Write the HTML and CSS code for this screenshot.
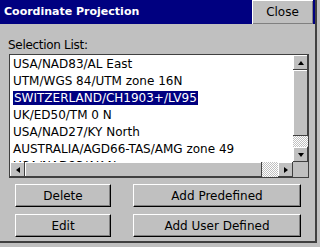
FILE: index.html
```html
<!DOCTYPE html>
<html lang="en">
<head>
  <meta charset="UTF-8" />
  <title>Coordinate Projection</title>
  <link rel="stylesheet" href="styles.css">
</head>
<body>

<div class="window">
  <div class="titlebar">
    <span class="title">Coordinate Projection</span>
    <button class="close">Close</button>
  </div>

  <div class="content">
    <div class="label">Selection List:</div>

    <div class="listbox">
      <div class="list-main">
        <div class="items">
          <div class="item">USA/NAD83/AL East</div>
          <div class="item">UTM/WGS 84/UTM zone 16N</div>
          <div class="item"><span class="selected">SWITZERLAND/CH1903+/LV95</span></div>
          <div class="item">UK/ED50/TM 0 N</div>
          <div class="item">USA/NAD27/KY North</div>
          <div class="item">AUSTRALIA/AGD66-TAS/AMG zone 49</div>
          <div class="item">USA/NAD83/AK N</div>
        </div>
        <div class="vscroll">
          <div class="arrow"><span class="tri up"></span></div>
          <div class="vthumb"></div>
          <div class="trough"></div>
          <div class="arrow"><span class="tri down"></span></div>
        </div>
      </div>
      <div class="hscroll">
        <div class="arrow"><span class="tri left"></span></div>
        <div class="hthumb"></div>
        <div class="trough"></div>
        <div class="arrow"><span class="tri right"></span></div>
        <div class="corner"></div>
      </div>
    </div>

    <div class="buttons">
      <button class="btn">Delete</button>
      <button class="btn">Add Predefined</button>
      <button class="btn">Edit</button>
      <button class="btn">Add User Defined</button>
    </div>
  </div>
</div>

</body>
</html>
```

FILE: styles.css
```css
body {
  margin: 0;
  background: #c0c0c0;
  font-family: "DejaVu Sans", sans-serif;
  font-size: 12px;
  color: #000;
}
.window {
  width: 315px;
  height: 241px;
  border-right: 2px solid #404040;
  border-bottom: 2px solid #404040;
  display: flex;
  flex-direction: column;
}
.titlebar {
  display: flex;
  height: 24px;
}
.title {
  flex: 1;
  background: #000080;
  color: #fff;
  font-weight: bold;
  font-size: 11px;
  line-height: 23px;
  padding-left: 4px;
}
.close {
  width: 63px;
  height: 24px;
  margin: 0;
  padding: 0;
  background: #c0c0c0;
  font-family: inherit;
  font-size: 12px;
  color: #000;
  border: none;
  border-right: 2px solid #000080;
  box-shadow: inset 1px 1px 0 #fff, inset -1px -1px 0 #808080;
}
.content {
  padding: 0 0 0 9px;
}
.label {
  margin: 12px 0 0 -1px;
  height: 18px;
  line-height: 18px;
  letter-spacing: -0.3px;
}
.listbox {
  width: 298px;
  height: 122px;
  border: 1px solid #404040;
  background: #fff;
  display: flex;
  flex-direction: column;
}
.list-main {
  flex: 1;
  display: flex;
  overflow: hidden;
}
.items {
  flex: 1;
  overflow: hidden;
  padding-top: 1px;
}
.item {
  height: 17px;
  line-height: 17px;
  padding-left: 3px;
  white-space: nowrap;
}
.selected {
  background: #000080;
  color: #fff;
  padding: 0 1px;
}
.vscroll {
  width: 15px;
  display: flex;
  flex-direction: column;
}
.arrow {
  width: 15px;
  height: 15px;
  background: #c0c0c0;
  box-shadow: inset -1px -1px 0 #404040, inset 1px 1px 0 #fff;
  display: flex;
  align-items: center;
  justify-content: center;
}
.trough {
  flex: 1;
  background: repeating-conic-gradient(#fff 0 25%, #c0c0c0 0 50%) 0 0 / 2px 2px;
}
.vthumb {
  height: 66px;
  background: #c0c0c0;
  box-shadow: inset -1px -1px 0 #404040, inset 1px 1px 0 #fff;
}
.hscroll {
  height: 15px;
  display: flex;
}
.hthumb {
  width: 237px;
  background: #c0c0c0;
  box-shadow: inset -1px -1px 0 #404040, inset 1px 1px 0 #fff;
}
.corner {
  width: 15px;
  background: #c0c0c0;
}
.tri {
  width: 0;
  height: 0;
  border: 3px solid transparent;
}
.tri.up { border-bottom: 4px solid #000; border-top-width: 0; }
.tri.down { border-top: 4px solid #000; border-bottom-width: 0; }
.tri.left { border-right: 4px solid #000; border-left-width: 0; }
.tri.right { border-left: 4px solid #000; border-right-width: 0; }
.buttons {
  display: grid;
  grid-template-columns: 96px 168px;
  column-gap: 22px;
  row-gap: 7px;
  margin: 6px 0 0 6px;
}
.btn {
  height: 23px;
  margin: 0;
  padding: 0;
  background: #c0c0c0;
  font-family: inherit;
  font-size: 12px;
  color: #000;
  border: 1px solid;
  border-color: #fff #000 #000 #fff;
  box-shadow: inset -1px -1px 0 #808080;
}
```
